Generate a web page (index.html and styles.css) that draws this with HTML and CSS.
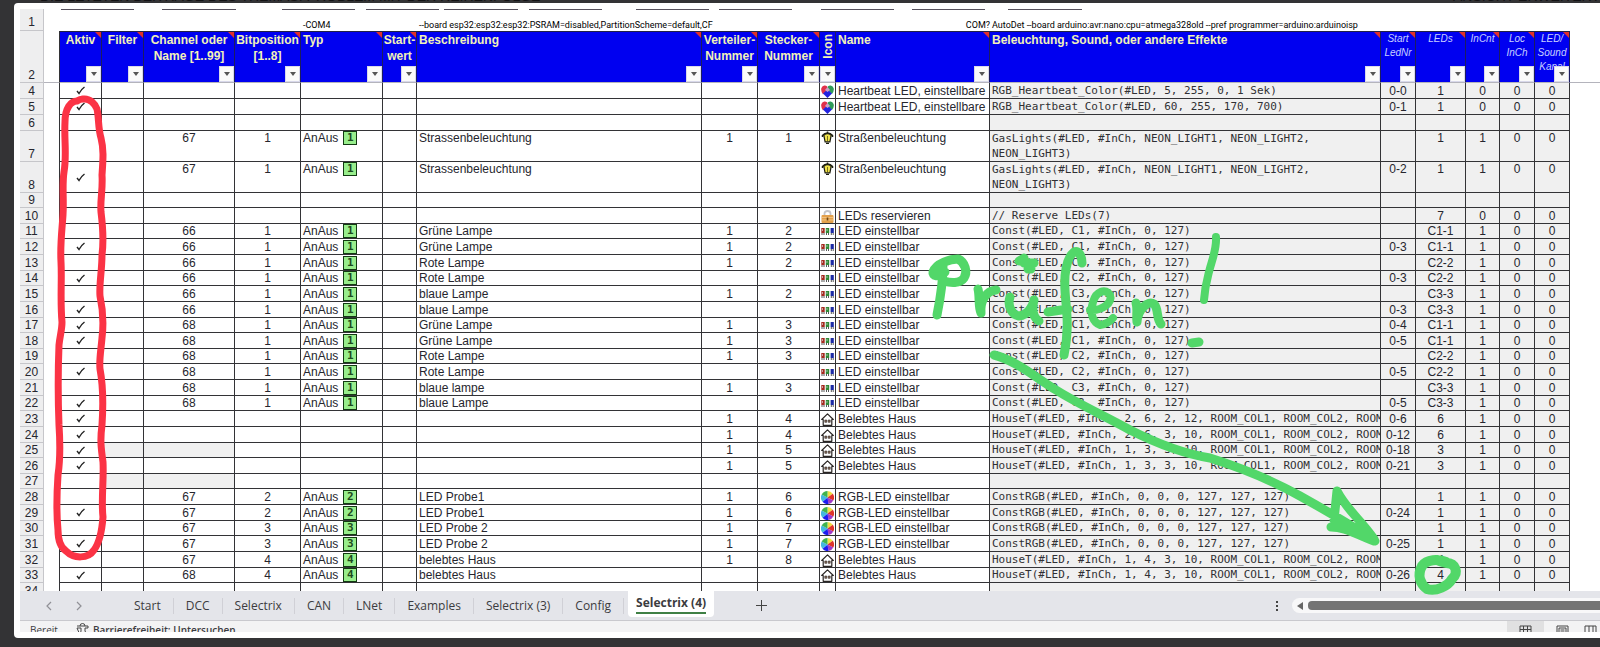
FILE: index.html
```html
<!DOCTYPE html>
<html lang="de">
<head>
<meta charset="utf-8">
<title>Selectrix (4)</title>
<link rel="stylesheet" href="styles.css">
</head>
<body>
<header class="forum"><span>DIE LETZTEN BEITRÄGE DES THEMAS: PROBLEM MIT DER REIHENFOLGE</span><span>ANSICHT ERWEITERT</span></header>

<svg class="symbols" aria-hidden="true">
  <symbol id="heart" viewBox="0 0 13 13"><path d="M6.500 5L2 9.500Q-.5 6 .4 3Q1.500 0 4 .5Q6 .8 6.500 2z" fill="#e0304a"/><path d="M6.500 5L11 9Q13.500 6 12.600 3Q11.500 0 9 .5Q7 .8 6.500 2z" fill="#2f9b58"/><path d="M6.500 4.500L2 8.500L6.500 13L11 8.500z" fill="#2222e0"/><path d="M6.500 2L4 5L6.500 7L9 5z" fill="#c9a0c8"/></symbol>
  <symbol id="lamp" viewBox="0 0 13 13"><path d="M6.500 .5V2M1.500 6V4.500Q3.500 2 6.500 2Q9.500 2 11.500 4.500V6M5 12.500h3" fill="none" stroke="#1d1d10" stroke-width="1.500"/><path d="M2.800 4.200Q6.500 1.200 10.200 4.200L8.900 10.800H4.100z" fill="#f2e44b" stroke="#1d1d10" stroke-width="1.200"/><path d="M6.500 5v5" stroke="#77701c" stroke-width="1"/></symbol>
  <symbol id="lock" viewBox="0 0 13 13"><path d="M3.500 6V3.500Q3.500 1 6.500 1Q9.500 1 9.500 3.500V6" fill="none" stroke="#c4c4c8" stroke-width="1.800"/><rect x=".5" y="5" width="12" height="8" rx="1" fill="#e3a04b"/><path d="M1 7.500h11M1 10h11" stroke="#f2c27e"/><path d="M6.500 7.500v3" stroke="#704813" stroke-width="1.600"/></symbol>
  <symbol id="leds" viewBox="0 0 13 13"><path d="M.3 3h3.400v5H.3z" fill="#a52a20"/><path d="M4.800 3h3.400v5H4.800z" fill="#2f8a35"/><path d="M9.600 3h3.200v5H9.600z" fill="#1c2ba5"/><path d="M1 8v2M3 8v2M5.500 8v2M7.500 8v2M10.300 8v2M12.200 8v2" stroke="#444" stroke-width=".9"/><path d="M6 4v2M1.500 4v2" stroke="#d8d8d8" stroke-width=".7"/></symbol>
  <symbol id="house" viewBox="0 0 13 13"><path d="M.7 6.500L6.500 .9L12.300 6.500H10.800V12.300H2.200V6.500z" fill="#fff" stroke="#2a2523" stroke-width="1.200" stroke-linejoin="round"/><path d="M3.800 7h2v2.300h-2zM7.200 7h2v2.300h-2z" fill="#8b6a55" stroke="#2a2523" stroke-width=".6"/></symbol>
  <symbol id="wheel" viewBox="0 0 13 13"><path d="M6.500 6.500L6.500 0A6.500 6.500 0 0 1 11.800 2.800z" fill="#f3e040"/><path d="M6.500 6.500L11.800 2.800A6.500 6.500 0 0 1 12.300 9.500z" fill="#e0352b"/><path d="M6.500 6.500L12.300 9.500A6.500 6.500 0 0 1 7.500 13z" fill="#a23ac8"/><path d="M6.500 6.500L7.500 13A6.500 6.500 0 0 1 1.500 10.700z" fill="#1c1cf0"/><path d="M6.500 6.500L1.500 10.700A6.500 6.500 0 0 1 .7 3.500z" fill="#44b8e0"/><path d="M6.500 6.500L.7 3.500A6.500 6.500 0 0 1 6.500 0z" fill="#3fb34e"/></symbol>
</svg>

<main class="excel">
  <div class="viewport">
    <table class="sheet">
      <colgroup>
        <col class="w24"><col class="w16"><col class="w42"><col class="w42"><col class="w91"><col class="w66"><col class="w82"><col class="w34"><col class="w285"><col class="w56"><col class="w62"><col class="w16"><col class="w154"><col class="w391"><col class="w35"><col class="w50"><col class="w34"><col class="w35"><col class="w35"><col>
      </colgroup>
      <thead>
        <tr class="options">
          <th class="num">1</th><td></td><td></td><td></td><td></td><td></td><td>-COM4</td><td></td>
          <td>--board esp32:esp32:esp32:PSRAM=disabled,PartitionScheme=default,CF</td><td></td><td></td><td></td>
          <td class="right">COM?</td><td colspan="6">AutoDet --board arduino:avr:nano:cpu=atmega328old --pref programmer=arduino:arduinoisp</td><td></td>
        </tr>
        <tr class="titles" id="titles"></tr>
      </thead>
      <tbody id="rows"></tbody>
    </table>
  </div>

  <nav class="tabs" aria-label="Tabellenblätter">
    <button class="arrow" aria-label="Zurück"><svg viewBox="0 0 8 10"><path d="M6 1L2 5L6 9"/></svg></button>
    <button class="arrow" aria-label="Weiter"><svg viewBox="0 0 8 10"><path d="M2 1L6 5L2 9"/></svg></button>
    <div class="tablist">
      <button class="tab">Start</button><button class="tab">DCC</button><button class="tab">Selectrix</button><button class="tab">CAN</button><button class="tab">LNet</button><button class="tab">Examples</button><button class="tab">Selectrix (3)</button><button class="tab">Config</button><button class="tab active"><span>Selectrix (4)</span></button>
    </div>
    <button class="add" aria-label="Neues Blatt"><svg viewBox="0 0 11 11"><path d="M5.500 0v11M0 5.500h11"/></svg></button>
    <span class="dots"><i></i><i></i><i></i></span>
    <div class="scroll"><svg viewBox="0 0 6 8"><path d="M6 0v8L0 4z"/></svg><div class="thumb"></div></div>
  </nav>

  <footer class="status">
    <span>Bereit</span>
    <svg class="access" viewBox="0 0 13 13"><path d="M1 3h11v2H9v3l2 4M4 12L5 8V5H1zM4 3a2 2 0 0 1 5 0M9 9l4 3"/></svg>
    <span class="strong">Barrierefreiheit: Untersuchen</span>
    <div class="views">
      <button class="on" aria-label="Normal"><svg viewBox="0 0 13 13"><path d="M1 1h11v10H1zM1 4.500h11M1 8h11M4.500 1v10M8.500 1v10"/></svg></button>
      <button aria-label="Seitenlayout"><svg viewBox="0 0 13 13"><path d="M1 1h11v11H1zM3 12V3h7v9M4.500 5h4M4.500 7h4M4.500 9h4"/></svg></button>
      <button aria-label="Umbruchvorschau"><svg viewBox="0 0 13 13"><path d="M1 1h11v10H1zM5 1v7H1M9 1v7h3"/></svg></button>
    </div>
  </footer>
</main>

<svg class="ink" viewBox="0 0 1600 647" aria-hidden="true">
  <path class="rule" d="M61 9.500h73M162 9.500h74M282 9.500h73M366 9.500h73M444 9.500h74M529 9.500h73M636 9.500h73M719 9.500h73M821 9.500h73M912 9.500h73M1008 9.500h74"/>
  <path class="red" d="M83 99C90 98 95 104 97 109C99 118 98 128 101 138C104 150 103 160 102 175C103 190 100 200 101 212C103 228 104 240 102 255C102 270 99 285 100 296C103 310 104 322 102 338C101 350 99 360 100 369C103 385 103 410 102 425C100 440 101 448 103 462C104 480 101 500 103 517C102 530 100 542 94 550C88 559 74 559 66 551C60 547 58 540 58 530C56 510 57 490 58 475C61 455 60 440 59 425C58 400 58 370 59 345C60 335 62 330 62 322C60 300 62 280 61 262C60 245 62 230 63 215C64 200 62 185 64 172C67 155 64 140 65 122C65 108 71 101 77 101Q80 99 83 99"/>
  <g class="green">
    <path d="M943 266C943 285 940 300 937 315M945 272C938 278 932 276 933 272C936 263 951 259 958 259C965 262 968 272 964 278C960 284 950 283 944 281"/>
    <path d="M978 289C980 297 978 306 981 313C980 301 986 291 996 290"/>
    <path d="M1010 297C1007 306 1012 315 1019 316C1028 315 1033 306 1034 300C1031 312 1034 318 1039 321M1019 261l5-3M1024 263h10M1028 269h3"/>
    <path d="M1082 263C1082 255 1078 250 1074 252C1066 258 1064 276 1065 290C1066 310 1070 325 1064 355M1048 312L1068 309"/>
    <path class="slim" d="M1090 310C1103 311 1113 302 1110 295C1106 288 1096 291 1093 302C1089 315 1094 323 1100 325Q1108 324 1113 318"/>
    <path d="M1136 303C1138 310 1136 316 1137 322C1138 309 1148 300 1154 304C1159 309 1156 319 1161 324"/>
    <path class="slim" d="M1216 237C1217 250 1211 262 1208 276Q1205 287 1204 300"/>
    <path d="M1192 343L1199 342"/>
    <path d="M994 355C1015 360 1035 377 1056 390C1080 405 1105 416 1130 430C1160 445 1185 454 1210 458C1245 469 1275 482 1300 496C1325 510 1350 524 1375 541M1337 491L1334 520M1337 491C1347 510 1361 520 1374 539M1331 527C1345 527 1355 534 1374 541"/>
    <path class="wide" d="M1446 562C1438 559 1427 559 1422 566C1417 575 1420 584 1427 589C1436 592 1448 586 1452 579C1459 573 1456 563 1446 563Q1442 562 1437 560"/>
  </g>
</svg>
<script src="sheet.js"></script>
</body>
</html>
```

FILE: styles.css
```css
* { box-sizing: border-box; }

body {
  margin: 0;
  height: 100vh;
  overflow: hidden;
  position: relative;
  display: flex;
  flex-direction: column;
  background: #333335;
  color: #26262e;
  font-family: "Liberation Sans", Arial, sans-serif;
  font-size: 12px;
}

button {
  margin: 0;
  padding: 0;
  border: 0;
  background: none;
  font: inherit;
  color: inherit;
}

.symbols { position: absolute; width: 0; height: 0; }

.forum {
  display: flex;
  justify-content: space-between;
  align-items: flex-end;
  height: 3px;
  flex: none;
  overflow: hidden;
  padding-left: 40px;
  color: #121214;
  font-size: 14px;
  line-height: 13px;
  white-space: nowrap;
}

.excel {
  flex: 1;
  min-height: 0;
  display: flex;
  flex-direction: column;
  margin: 0 0 9px 14px;
  padding: 6px 0 6px 6px;
  background: #fff;
  border-radius: 4px 0 0 4px;
}

.viewport { flex: 1; min-height: 0; overflow: hidden; }

/* sheet */
.sheet {
  width: 100%;
  table-layout: fixed;
  border-collapse: separate;
  border-spacing: 0;
  line-height: 14px;
}
.w16 { width: 16px; }
.w24 { width: 24px; }
.w34 { width: 34px; }
.w35 { width: 35px; }
.w42 { width: 42px; }
.w50 { width: 50px; }
.w56 { width: 56px; }
.w62 { width: 62px; }
.w66 { width: 66px; }
.w82 { width: 82px; }
.w91 { width: 91px; }
.w154 { width: 154px; }
.w285 { width: 285px; }
.w391 { width: 391px; }

.sheet th, .sheet td {
  padding: 0;
  overflow: hidden;
  white-space: nowrap;
  text-align: center;
  vertical-align: top;
}

.sheet .num {
  background: #eeeeef;
  border-right: 1px solid #c6c6ca;
  border-bottom: 1px solid #c6c6ca;
  font-weight: normal;
  vertical-align: bottom;
}

.options td, .options th { height: 22px; }
.sheet .options td {
  padding: 0 0 1px 2px;
  overflow: visible;
  vertical-align: bottom;
  text-align: left;
  font-family: Roboto, sans-serif;
  font-size: 9px;
  line-height: 10px;
  color: #000;
}
.sheet .options .right { text-align: right; }
.options .num { line-height: 16px; }

.titles > * { height: 52px; border-bottom: 1px solid #b4b4bc; }
.sheet .titles .num { line-height: 14px; }
.sheet .titles .title {
  position: relative;
  background: #0000f0;
  border-top: 1px solid #222244;
  border-right: 1px solid #1c1c60;
  color: #f2f2b8;
  font-weight: bold;
  line-height: 16px;
  white-space: pre;
}
.sheet .titles .small {
  color: #c8d0ff;
  font-size: 10px;
  font-style: italic;
  font-weight: normal;
  line-height: 14px;
}
.title.note::after {
  content: "";
  position: absolute;
  top: 0;
  right: 0;
  border: 3px solid #e0302a;
  border-left-color: transparent;
  border-bottom-color: transparent;
}
.title .upright {
  writing-mode: vertical-rl;
  transform: rotate(180deg);
  line-height: 14px;
  padding-bottom: 2px;
}
.filter {
  position: absolute;
  right: 0;
  bottom: 0;
  width: 15px;
  height: 16px;
  background: #fafafa;
  border: 1px solid #d8d8ea;
  display: grid;
  place-items: center;
}
.filter::before {
  content: "";
  border: 3px solid transparent;
  border-top: 4px solid #555;
  border-bottom: 0;
}

tbody tr { height: 16px; }
tbody tr:nth-child(8n+6), tbody tr:nth-child(8n+8), tbody tr:nth-child(8n+11) { height: 15px; }
tbody tr.tall { height: 31px; }

.sheet .cell {
  border-right: 1px solid #333336;
  border-bottom: 1px solid #333336;
  vertical-align: bottom;
}
.sheet .tall .cell { vertical-align: top; }
.sheet .left { text-align: left; padding-left: 2px; }
.sheet .grey { background: #f0f0f0; }
.sheet .edge { border-right: 1px solid #333336; }
.sheet tr .cell.tick { vertical-align: middle; }
.sheet .code { font-family: "DejaVu Sans Mono", monospace; font-size: 11px; color: #303034; }
.tall .code { line-height: 15px; }

.cell svg { display: block; margin: 0 auto; width: 13px; height: 13px; }
.sheet .tick svg { width: 9px; height: 9px; }
.tick path { fill: none; stroke: #222; stroke-width: 1.4; }

.badge {
  display: inline-block;
  width: 14px;
  height: 14px;
  margin-left: 5px;
  vertical-align: top;
  background: #98ee8c;
  border: 1px solid #123a12;
  color: #1c4a1c;
  font: bold 11px/12px "DejaVu Sans Mono", monospace;
  text-align: center;
}

/* sheet tabs */
.tabs {
  flex: none;
  display: flex;
  align-items: center;
  height: 30px;
  background: #e4e5ea;
  border-bottom: 1px solid #c9c9ce;
  font-family: "Open Sans", sans-serif;
  color: #3c3c40;
}
.arrow { width: 30px; margin-left: 14px; height: 10px; text-align: left; }
.arrow + .arrow { margin-left: 0; }
.arrow svg { display: block; width: 30px; height: 10px; fill: none; stroke: #909096; stroke-width: 1.2; }
.tablist { display: flex; align-items: center; align-self: stretch; margin-left: 28px; }
.tab { padding: 0 12px; border-right: 1px solid #d0d0d6; line-height: 16px; }
.tab.active {
  align-self: flex-start;
  height: 26px;
  margin-left: 4px;
  padding: 4px 8px;
  background: #fff;
  border: 0;
  border-radius: 0 0 4px 4px;
  font-weight: bold;
}
.tab.active span { display: block; border-bottom: 2px solid #3f8045; height: 19px; }
.add { margin-left: 42px; }
.add svg { display: block; width: 11px; height: 11px; stroke: #444; fill: none; }
.dots { margin-left: auto; margin-right: 14px; display: grid; gap: 2px; }
.dots i { width: 2px; height: 2px; background: #444; }
.scroll {
  width: 308px;
  height: 15px;
  display: flex;
  align-items: center;
  gap: 2px;
  padding-left: 4px;
  background: #f8f8f9;
  border-radius: 8px 0 0 8px;
}
.scroll svg { width: 8px; height: 8px; fill: #666; }
.thumb { flex: 1; height: 9px; margin-left: 2px; background: #747474; border-radius: 4px 0 0 4px; }

/* status bar */
.status {
  flex: none;
  display: flex;
  height: 11px;
  overflow: hidden;
  padding: 2px 0 0 10px;
  background: #f3f3f4;
  color: #3c3c40;
  font: 10px/14px "Open Sans", sans-serif;
}
.status svg { width: 13px; height: 13px; fill: none; stroke: #444; }
.status .access { margin: 0 4px 0 18px; flex: none; }
.strong { font-weight: 600; }
.views { display: flex; margin-left: auto; margin-top: -2px; }
.views button { width: 37px; padding-top: 3px; height: 18px; }
.views .on { background: #e0e0e1; }
.views button:last-child { width: 19px; }
.views svg { display: block; margin: 0 auto; }

/* freehand marks */
.ink { position: absolute; top: 0; left: 0; width: 1600px; height: 647px; pointer-events: none; }
.ink path { fill: none; stroke-linecap: round; stroke-linejoin: round; }
.ink .rule { stroke: #55505c; stroke-linecap: butt; }
.ink .red { stroke: #fb3345; stroke-width: 7; }
.ink .green path { stroke: #52d769; stroke-width: 9; }
.ink .green .slim { stroke-width: 8; }
.ink .green .wide { stroke-width: 10; }
```

FILE: sheet.js
```js
const titles = [
  ["Aktiv"], ["Filter"], ["Channel oder\nName [1..99]"], ["Bitposition\n[1..8]"],
  ["Typ", "left"], ["Start-\nwert"], ["Beschreibung", "left"], ["Verteiler-\nNummer"],
  ["Stecker-\nNummer"], ["Icon", "up"], ["Name", "left"],
  ["Beleuchtung, Sound, oder andere Effekte", "left"],
  ["Start\nLedNr", "small"], ["LEDs", "small"], ["InCnt", "small"],
  ["Loc\nInCh", "small"], ["LED/\nSound\nKanal", "small"]
];

const gas = "GasLights(#LED, #InCh, NEON_LIGHT1, NEON_LIGHT2,<br>NEON_LIGHT3)";
const led = (c) => `Const(#LED, ${c}, #InCh, 0, 127)`;
const house = (n) => `HouseT(#LED, #InCh, ${n}, ROOM_COL1, ROOM_COL2, ROOM_`;
const rgb = "ConstRGB(#LED, #InCh, 0, 0, 0, 127, 127, 127)";
const E = "LED einstellbar", H = "Belebtes Haus", R = "RGB-LED einstellbar", S = "Straßenbeleuchtung";

// row, active, channel, bit, description, distributor, plug, icon, name, code, start, LEDs, InCnt
const rows = [
  [4, 1, "", "", "", "", "", "heart", "Heartbeat LED, einstellbare", "RGB_Heartbeat_Color(#LED, 5, 255, 0, 1 Sek)", "0-0", 1, 0],
  [5, 1, "", "", "", "", "", "heart", "Heartbeat LED, einstellbare", "RGB_Heartbeat_Color(#LED, 60, 255, 170, 700)", "0-1", 1, 0],
  [6],
  [7, 0, 67, 1, "Strassenbeleuchtung", 1, 1, "lamp", S, gas, "", 1, 1],
  [8, 1, 67, 1, "Strassenbeleuchtung", "", "", "lamp", S, gas, "0-2", 1, 1],
  [9],
  [10, 0, "", "", "", "", "", "lock", "LEDs reservieren", "// Reserve LEDs(7)", "", 7, 0],
  [11, 0, 66, 1, "Grüne Lampe", 1, 2, "leds", E, led("C1"), "", "C1-1", 1],
  [12, 1, 66, 1, "Grüne Lampe", 1, 2, "leds", E, led("C1"), "0-3", "C1-1", 1],
  [13, 0, 66, 1, "Rote Lampe", 1, 2, "leds", E, led("C2"), "", "C2-2", 1],
  [14, 1, 66, 1, "Rote Lampe", "", "", "leds", E, led("C2"), "0-3", "C2-2", 1],
  [15, 0, 66, 1, "blaue Lampe", 1, 2, "leds", E, led("C3"), "", "C3-3", 1],
  [16, 1, 66, 1, "blaue Lampe", "", "", "leds", E, led("C3"), "0-3", "C3-3", 1],
  [17, 1, 68, 1, "Grüne Lampe", 1, 3, "leds", E, led("C1"), "0-4", "C1-1", 1],
  [18, 1, 68, 1, "Grüne Lampe", 1, 3, "leds", E, led("C1"), "0-5", "C1-1", 1],
  [19, 0, 68, 1, "Rote Lampe", 1, 3, "leds", E, led("C2"), "", "C2-2", 1],
  [20, 1, 68, 1, "Rote Lampe", "", "", "leds", E, led("C2"), "0-5", "C2-2", 1],
  [21, 0, 68, 1, "blaue lampe", 1, 3, "leds", E, led("C3"), "", "C3-3", 1],
  [22, 1, 68, 1, "blaue Lampe", "", "", "leds", E, led("C3"), "0-5", "C3-3", 1],
  [23, 1, "", "", "", 1, 4, "house", H, house("2, 6, 2, 12"), "0-6", 6, 1],
  [24, 1, "", "", "", 1, 4, "house", H, house("2, 6, 3, 10"), "0-12", 6, 1],
  [25, 1, "", "", "", 1, 5, "house", H, house("1, 3, 3, 10"), "0-18", 3, 1],
  [26, 1, "", "", "", 1, 5, "house", H, house("1, 3, 3, 10"), "0-21", 3, 1],
  [27],
  [28, 0, 67, 2, "LED Probe1", 1, 6, "wheel", R, rgb, "", 1, 1],
  [29, 1, 67, 2, "LED Probe1", 1, 6, "wheel", R, rgb, "0-24", 1, 1],
  [30, 0, 67, 3, "LED Probe 2", 1, 7, "wheel", R, rgb, "", 1, 1],
  [31, 1, 67, 3, "LED Probe 2", 1, 7, "wheel", R, rgb, "0-25", 1, 1],
  [32, 0, 67, 4, "belebtes Haus", 1, 8, "house", H, house("1, 4, 3, 10"), "", 4, 1],
  [33, 1, 68, 4, "belebtes Haus", "", "", "house", H, house("1, 4, 3, 10"), "0-26", 4, 1],
  [34]
];

const tick = '<svg viewBox="0 0 9 9"><path d="M1 5L3 7.500Q5 3.500 8.500 1"/></svg>';
const cell = (value, kind = "") => `<td class="cell ${kind}">${value ?? ""}</td>`;

document.getElementById("titles").innerHTML =
  '<th class="num">2</th><td class="edge"></td>' +
  titles.map(([text, kind = ""]) => {
    const label = kind === "up" ? `<span class="upright">${text}</span>` : text;
    const note = kind === "up" ? "" : "note";
    return `<th class="title ${kind} ${note}">${label}<button class="filter" aria-label="Filter ${text}"></button></th>`;
  }).join("") + "<td></td>";

document.getElementById("rows").innerHTML = rows.map((r) => {
  const [n, on, channel, bit, text, dist, plug, icon, name, code, start, leds, count] = r;
  const shade = n === 25 || n === 27 ? "grey" : "";
  const zero = r.length > 1 ? 0 : "";
  return `<tr class="${n === 7 || n === 8 ? "tall" : ""}"><th class="num">${n}</th><td class="edge"></td>` +
    cell(on ? tick : "", "tick") + cell("", shade) + cell(channel, shade) + cell(bit) +
    cell(bit ? `AnAus<span class="badge">${bit}</span>` : "", "left") + cell("") +
    cell(text, "left") + cell(dist) + cell(plug) +
    cell(icon ? `<svg><use href="#${icon}"/></svg>` : "") + cell(name, "left") +
    cell(code, "left grey code") + cell(start, "grey") + cell(leds, "grey") +
    cell(count, "grey") + cell(zero, "grey") + cell(zero, "grey") + "<td></td></tr>";
}).join("");
```
